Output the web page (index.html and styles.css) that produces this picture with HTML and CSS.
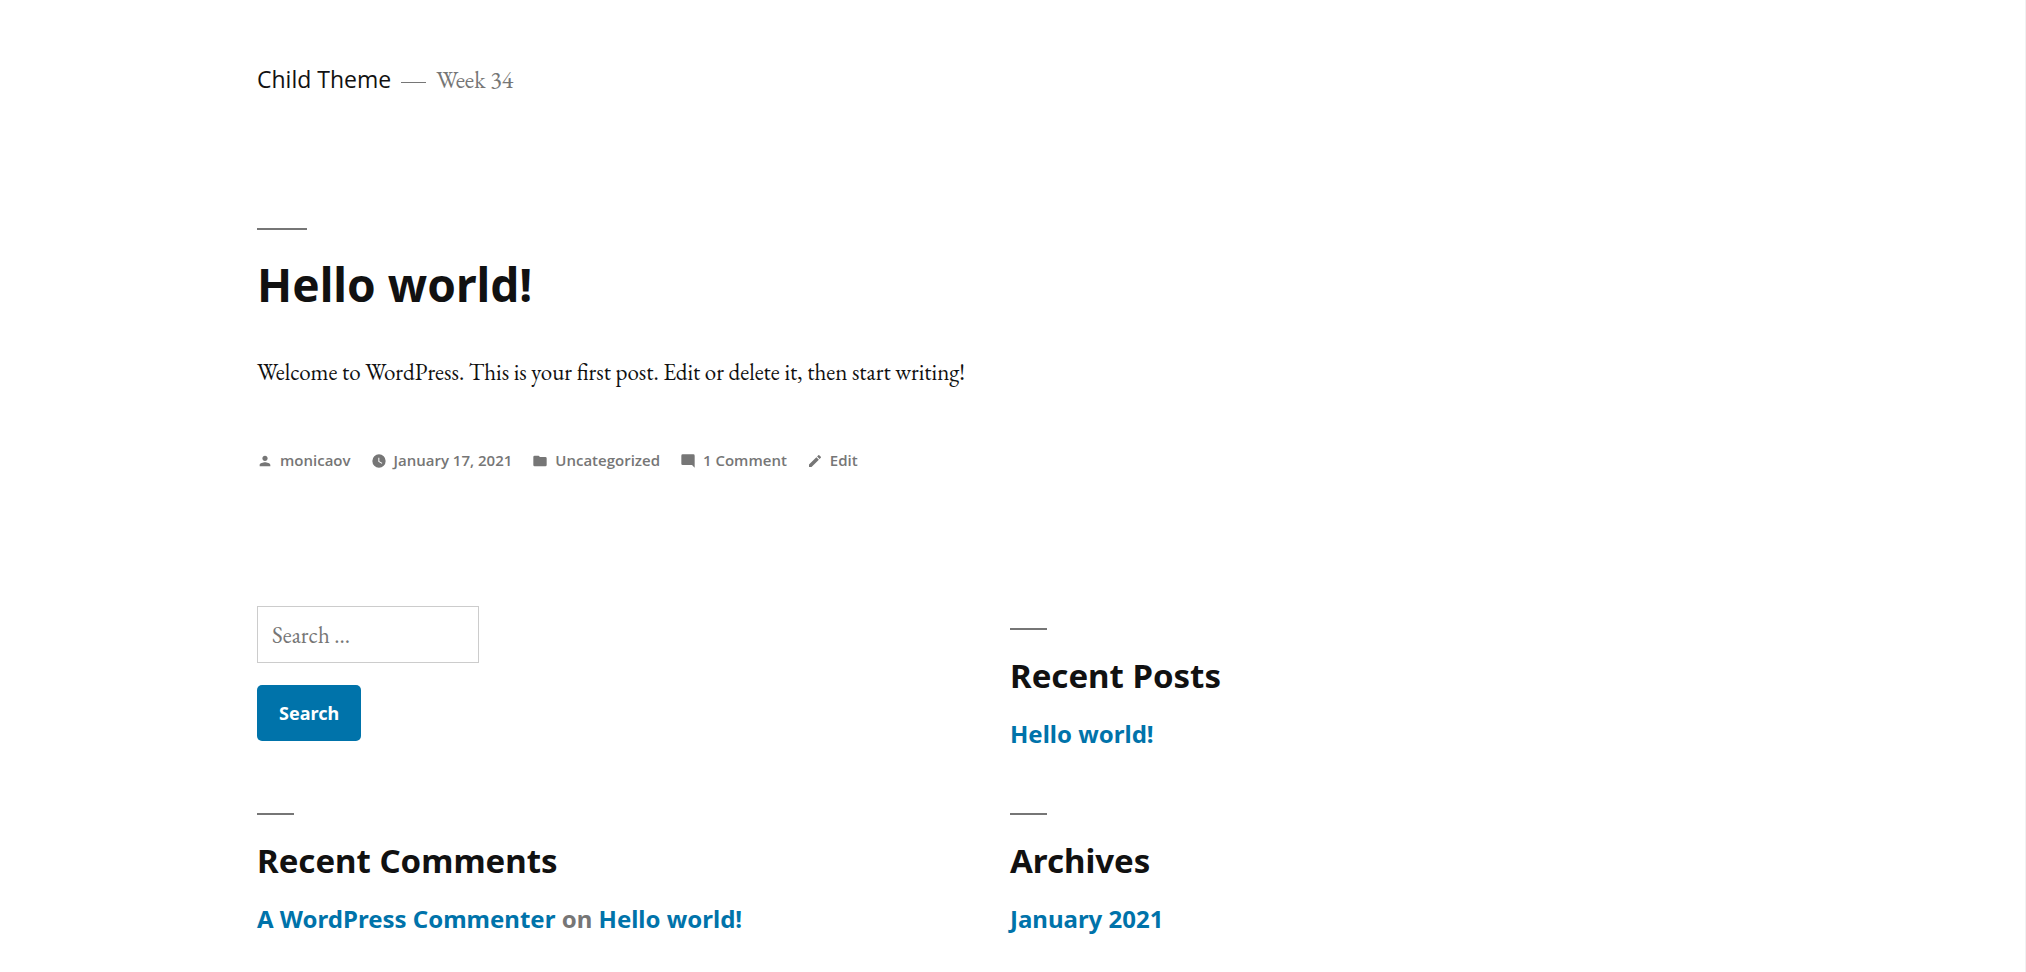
FILE: index.html
```
<!DOCTYPE html>
<html lang="en">
  <head>
    <meta charset="UTF-8" />
    <meta name="viewport" content="width=device-width, initial-scale=1.0" />
    <title>Child Theme</title>
    <link rel="stylesheet" href="styles.css">
  </head>
  <body>

    <header class="site-header">
      <p class="site-title"><a href="#">Child Theme</a></p>
      <span class="dash"></span>
      <p class="site-description">Week 34</p>
    </header>

    <main>
      <article class="post">
        <h1 class="entry-title"><a href="#">Hello world!</a></h1>
        <p class="entry-content">Welcome to WordPress. This is your first post. Edit or delete it, then start writing!</p>
        <div class="entry-footer">
          <a href="#">
            <svg viewBox="0 0 24 24"><path d="M12 12c2.210 0 4-1.790 4-4s-1.790-4-4-4-4 1.790-4 4 1.790 4 4 4zm0 2c-2.670 0-8 1.340-8 4v2h16v-2c0-2.660-5.330-4-8-4z"/></svg>
            monicaov
          </a>
          <a href="#">
            <svg viewBox="0 0 24 24"><path fill-rule="evenodd" d="M12 2a10 10 0 1 0 0 20a10 10 0 1 0 0-20zM16.200 16.200L11 13V7h1.500v5.200l4.500 2.700z"/></svg>
            January 17, 2021
          </a>
          <a href="#">
            <svg viewBox="0 0 24 24"><path d="M10 4H4a2 2 0 0 0-2 2v12a2 2 0 0 0 2 2h16a2 2 0 0 0 2-2V8a2 2 0 0 0-2-2h-8z"/></svg>
            Uncategorized
          </a>
          <a href="#">
            <svg viewBox="0 0 24 24"><path d="M22 4a2 2 0 0 0-2-2H4a2 2 0 0 0-2 2v12a2 2 0 0 0 2 2h14l4 4z"/></svg>
            1 Comment
          </a>
          <a href="#">
            <svg viewBox="0 0 24 24"><path d="M3 17.250V21h3.750L17.810 9.940l-3.750-3.750zM20.710 7.040a1 1 0 0 0 0-1.410l-2.340-2.340a1 1 0 0 0-1.410 0l-1.830 1.830 3.750 3.750z"/></svg>
            Edit
          </a>
        </div>
      </article>
    </main>

    <footer class="widget-area">
      <section class="widget">
        <form class="search-form">
          <input type="search" aria-label="Search for:" placeholder="Search …" />
          <button type="submit">Search</button>
        </form>
      </section>
      <section class="widget">
        <h2>Recent Posts</h2>
        <ul>
          <li><a href="#">Hello world!</a></li>
        </ul>
      </section>
      <section class="widget">
        <h2>Recent Comments</h2>
        <ul>
          <li><a href="#">A WordPress Commenter</a> on <a href="#">Hello world!</a></li>
        </ul>
      </section>
      <section class="widget">
        <h2>Archives</h2>
        <ul>
          <li><a href="#">January 2021</a></li>
        </ul>
      </section>
    </footer>

  </body>
</html>
```

FILE: styles.css
```
* {
  box-sizing: border-box;
}

body {
  margin: 0;
  min-height: 100vh;
  padding: 59px 262px 0 257px;
  border-right: 1px solid #f1f1f1;
  background: #fff;
  color: #111;
  font-family: "EB Garamond", Garamond, "Liberation Serif", serif;
  font-size: 23px;
}

h1, h2, p, ul {
  margin: 0;
  padding: 0;
}

a {
  color: inherit;
  text-decoration: none;
}

.site-header {
  display: flex;
  align-items: baseline;
  gap: 10px;
  line-height: 40px;
}

.site-title {
  font-family: "Segoe UI", "Open Sans", sans-serif;
  font-size: 23px;
}

.dash {
  width: 25px;
  height: 6px;
  border-top: 1px solid #767676;
}

.site-description {
  color: #767676;
  font-size: 24px;
}

.post {
  padding-top: 128px;
}

h1::before,
h2::before {
  content: "";
  display: block;
  height: 2px;
  background: #767676;
}

h1::before {
  width: 50px;
  margin-bottom: 22px;
}

h2::before {
  width: 37px;
  margin-bottom: 22px;
}

.entry-title {
  font-family: "Segoe UI", "Noto Sans", sans-serif;
  font-size: 46px;
  line-height: 64px;
}

.entry-content {
  margin-top: 36px;
  line-height: 40px;
}

.entry-footer {
  display: flex;
  flex-wrap: wrap;
  gap: 20px;
  margin-top: 52px;
  color: #767676;
  font-family: "Segoe UI", "Open Sans", sans-serif;
  font-size: 15px;
  font-weight: 600;
  line-height: 32px;
}

.entry-footer a {
  display: flex;
  align-items: center;
  gap: 7px;
}

.entry-footer svg {
  width: 16px;
  height: 16px;
  margin-top: 2px;
  fill: currentColor;
}

.widget-area {
  display: grid;
  grid-template-columns: 1fr 1fr;
  margin-top: 130px;
  font-family: "Segoe UI", "Noto Sans", sans-serif;
  font-weight: 700;
}

.widget {
  min-height: 185px;
}

.search-form {
  display: flex;
  flex-direction: column;
  align-items: flex-start;
  gap: 22px;
}

.search-form input {
  width: 222px;
  height: 57px;
  padding: 0 14px;
  border: 1px solid #ccc;
  font-family: "EB Garamond", Garamond, "Liberation Serif", serif;
  font-size: 23px;
}

.search-form input::placeholder {
  color: #767676;
}

.search-form button {
  height: 56px;
  padding: 0 22px;
  border: 0;
  border-radius: 5px;
  background: #0073aa;
  color: #fff;
  font-family: "Segoe UI", "Noto Sans", sans-serif;
  font-size: 18px;
  font-weight: 700;
}

.widget h2 {
  padding-top: 22px;
  font-size: 33px;
  line-height: 48px;
}

.widget ul {
  margin-top: 14px;
  color: #767676;
  font-size: 24px;
  line-height: 40px;
  list-style: none;
}

.widget li a {
  color: #0073aa;
}
```
